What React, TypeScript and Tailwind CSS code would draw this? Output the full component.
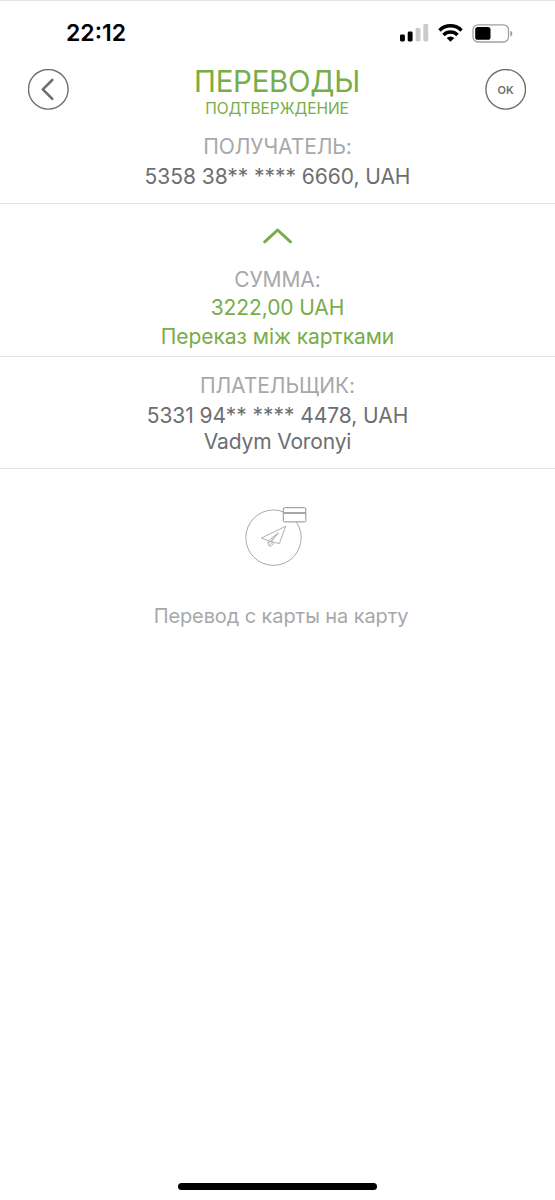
import React from 'react';

const StatusBar: React.FC = () => (
  <div className="flex h-[65px] items-center justify-between border-t border-[#e4e4e4] pr-[42px] pl-[66px]">
    <span className="text-[23px] leading-6 font-semibold text-black">22:12</span>
    <div className="flex items-center">
      <svg width="29" height="18" viewBox="0 0 29 18">
        <rect x="0" y="10.5" width="4.9" height="7" rx="1.4" fill="#000" />
        <rect x="7.7" y="7.5" width="4.9" height="10" rx="1.4" fill="#000" />
        <rect x="15.6" y="4" width="4.9" height="13.5" rx="1.4" fill="#cbcbcb" />
        <rect x="23.3" y="0" width="4.9" height="17.5" rx="1.4" fill="#cbcbcb" />
      </svg>
      <svg className="ml-[9px]" width="25" height="18" viewBox="0 0 25 18">
        <g fill="none" stroke="#000" strokeWidth="3.5">
          <path d="M1.5 6.4a15.6 15.6 0 0 1 22 0" />
          <path d="M5.5 10.9a10 10 0 0 1 14 0" />
        </g>
        <path d="M8.7 14a5.4 5.4 0 0 1 7.6 0L12.5 17.8Z" fill="#000" />
      </svg>
      <svg className="ml-[9px]" width="41" height="19" viewBox="0 0 41 19">
        <rect x="1" y="0.8" width="35.5" height="17.2" rx="5" fill="none" stroke="#a0a0a0" strokeWidth="1.3" />
        <rect x="3.2" y="3" width="15.3" height="12.8" rx="2.6" fill="#000" />
        <path d="M38.3 6.7c2.7 1 2.7 4.8 0 5.8Z" fill="#999" />
      </svg>
    </div>
  </div>
);

const Header: React.FC = () => (
  <header className="flex h-[59px] items-start justify-between pr-[29px] pl-7">
    <button className="mt-1 flex size-[41px] items-center justify-center">
      <svg width="41" height="41" viewBox="0 0 41 41" fill="none" stroke="#6d6e70">
        <circle cx="20.3" cy="20.3" r="19.8" strokeWidth="1.4" />
        <path d="M24.3 11 14.8 20.4l9.5 9.4" strokeWidth="2.6" strokeLinecap="round" strokeLinejoin="round" />
      </svg>
    </button>
    <div className="flex flex-col items-center text-[#78ad49]">
      <h1 className="text-[29.5px] leading-8 tracking-[-0.3px]">ПЕРЕВОДЫ</h1>
      <h2 className="mt-px text-[15.5px] leading-[22px] tracking-[-0.05px]">ПОДТВЕРЖДЕНИЕ</h2>
    </div>
    <button className="mt-1 size-[41px]">
      <svg width="41" height="41" viewBox="0 0 41 41">
        <circle cx="20.7" cy="20.3" r="19.8" fill="none" stroke="#6d6e70" strokeWidth="1.4" />
        <text x="20.7" y="25.3" textAnchor="middle" className="fill-[#6d6e70] text-[11px] font-semibold">OK</text>
      </svg>
    </button>
  </header>
);

const App: React.FC = () => {
  return (
    <div className="flex h-[1200px] w-[555px] flex-col overflow-hidden bg-white text-center font-['Inter','Liberation_Sans',sans-serif] text-[21px] text-[#6d6e70]">
      <StatusBar />
      <Header />

      <section className="h-20 border-b border-[#e4e4e4] pt-2">
        <p className="leading-[30px] tracking-[-0.08px] text-[#a7a8aa]">ПОЛУЧАТЕЛЬ:</p>
        <p className="leading-[30px] tracking-[-0.05px]">5358 38** **** 6660, UAH</p>
      </section>

      <section className="flex h-[153px] flex-col items-center border-b border-[#e4e4e4] pt-[23px]">
        <svg width="30" height="18" viewBox="0 0 30 18" fill="none">
          <path d="M1.7 14.8 14.6 3 27.5 14.8" stroke="#78ad49" strokeWidth="3" strokeLinecap="round" strokeLinejoin="round" />
        </svg>
        <p className="mt-[21px] leading-7 tracking-[-0.1px] text-[#a7a8aa]">СУММА:</p>
        <p className="leading-7 tracking-[-0.1px] text-[#78ad49]">3222,00 UAH</p>
        <p className="leading-[30px] tracking-[-0.05px] text-[#78ad49]">Переказ між картками</p>
      </section>

      <section className="h-28 border-b border-[#e4e4e4] pt-3.5">
        <p className="leading-[30px] tracking-[-0.08px] text-[#a7a8aa]">ПЛАТЕЛЬЩИК:</p>
        <p className="leading-[30px] tracking-[-0.05px]">5331 94** **** 4478, UAH</p>
        <p className="leading-[22px] tracking-[-0.15px]">Vadym Voronyi</p>
      </section>

      <section className="flex flex-1 flex-col items-center pt-9">
        {/* Paper plane in a circle with a bank card on its edge */}
        <svg width="65" height="66" viewBox="0 0 65 66" fill="none" stroke="#a9a9a9" strokeWidth="1">
          <circle cx="28.5" cy="32.7" r="27.7" />
          <g strokeWidth="0.9" strokeLinejoin="round">
            <path d="M40.7 21.3 16.3 33l7 2.7L33.3 27.8l-7 8.7 8 2.2Z" />
            <path d="M23.3 35.7v1.8M32.5 29l-8 8.3" />
            <path d="m22.8 37.8 2.6-1.4 3.3 2.1-2.8 2.9-1.5-.2ZM24.3 40.6l2.1-2.6" />
          </g>
          <rect x="38.3" y="2.7" width="22.5" height="14.2" rx="1.3" fill="#fff" stroke="#929292" />
          <path d="M38.3 8h22.5" stroke="#a6a6a6" strokeWidth="2" />
        </svg>
        <p className="mt-8 ml-[7px] text-[20px] leading-[26px] tracking-[-0.1px] text-[#a7a8aa]">Перевод с карты на карту</p>
      </section>

      <footer className="flex h-[17px] justify-center">
        <div className="h-[7px] w-[199px] rounded-full bg-black"></div>
      </footer>
    </div>
  );
};

export default App;
